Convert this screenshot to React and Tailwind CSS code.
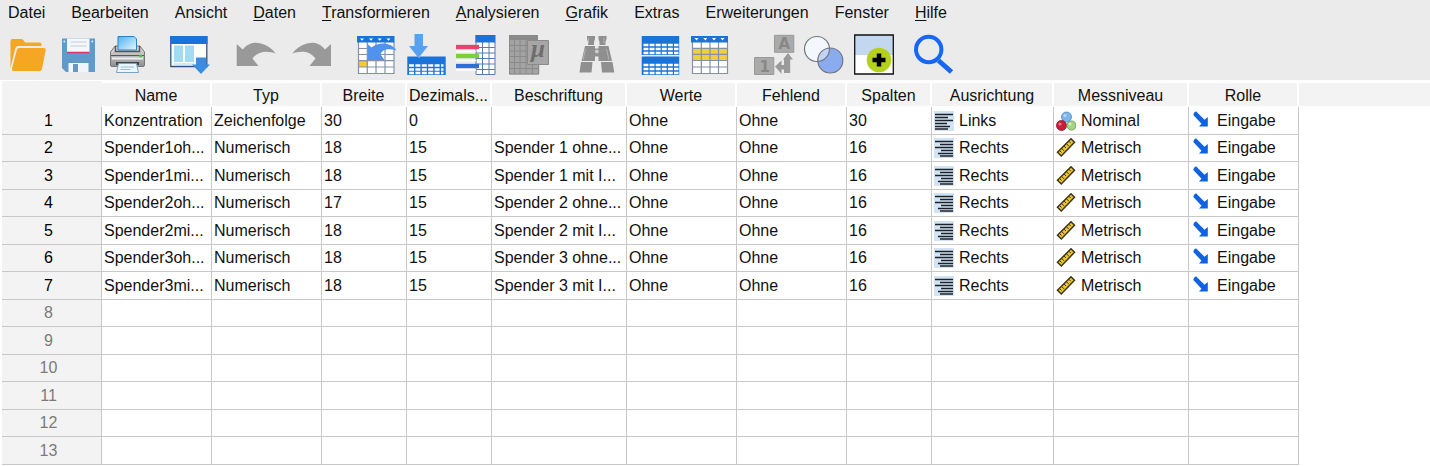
import React from 'react';

const menuItems = [
  { label: 'Datei' },
  { label: 'Bearbeiten', key: 1 },
  { label: 'Ansicht' },
  { label: 'Daten', key: 0 },
  { label: 'Transformieren', key: 0 },
  { label: 'Analysieren', key: 0 },
  { label: 'Grafik', key: 0 },
  { label: 'Extras' },
  { label: 'Erweiterungen' },
  { label: 'Fenster' },
  { label: 'Hilfe', key: 0 },
];

const BLUE = '#1a73d9';

const OpenIcon = () => (
  <>
    <path d="M2.500 34V7q0-2 2-2h9q1.500 0 2.500 2l1 1.500h15q1.500 0 1.500 2V12H10.500q-2.500 0-3.500 3z" fill="#f5a623" />
    <path d="M9 15.500q.5-1.500 2-1.500h25q2.200 0 1.700 2L34 35q-.5 2-2 2H6q-2.500 0-2-2.500z" fill="#f5a623" />
  </>
);

const SaveIcon = () => (
  <>
    <path d="M4 4.500h33V38H8l-4-4z" fill="#5f9acb" />
    <path d="M9 4.500h22.500V19H9z" fill="#f3f7fb" />
    <path d="M9 18.500h22.500" stroke="#d8345f" strokeWidth="1.500" />
    <path d="M12.500 8h16M12.500 12h16" stroke="#c9cdd1" strokeWidth="1.200" />
    <circle cx="6.300" cy="7.500" r="1" fill="#dcebf7" />
    <circle cx="34.300" cy="7.500" r="1" fill="#dcebf7" />
    <path d="M10.500 29h20v9h-20z" fill="#f1f6fb" />
    <path d="M15 30h5v8h-5z" fill="#5f9acb" />
  </>
);

const PrintIcon = () => (
  <>
    <defs>
      <linearGradient id="paper" x1="0" y1="0" x2="1" y2="1">
        <stop offset="0" stopColor="#4fb3f0" />
        <stop offset="1" stopColor="#e6f6ff" />
      </linearGradient>
      <linearGradient id="body" x1="0" y1="0" x2="0" y2="1">
        <stop offset="0" stopColor="#e2e2e2" />
        <stop offset="1" stopColor="#8e8e8e" />
      </linearGradient>
    </defs>
    <path d="M7 12h25l4.500 6v13q0 1.500-1.500 1.500H4Q2.500 32.500 2.500 31V18z" fill="url(#body)" stroke="#777" />
    <path d="M10 2.500h16l2.500 2.500v11H10z" fill="url(#paper)" stroke="#2d80c4" />
    <path d="M7.500 12v5.500h24V12" fill="none" stroke="#555" strokeWidth="1.500" />
    <path d="M3 21.500h33" stroke="#5a5a5a" />
    <path d="M4 24.500h31" stroke="#ededed" strokeWidth="2" />
    <path d="M8 28h23v3H8z" fill="#444" />
    <path d="M10.500 29.500h18l2 9h-22z" fill="#eaf5fd" stroke="#7aa2c0" />
    <path d="M13 33h13M12.500 35.500h10" stroke="#9dbfd6" />
    <circle cx="32.500" cy="22" r="1.500" fill="#3fd23b" />
  </>
);

const DialogIcon = () => (
  <>
    <path d="M2.800 3h36v29.500h-36z" fill="#fdfdf8" stroke="#34527a" strokeWidth="1.300" />
    <path d="M2.200 2h37.300v8H2.200z" fill={BLUE} />
    <path d="M6 11.500h9v16.500H6zM17 11.500h9v16.500h-9z" fill="#a3dcf2" />
    <path d="M6 30h20" stroke="#a3dcf2" />
    <path d="M28 23.500h10v7h4L33 40l-9-9.500h4z" fill="#3c8de0" />
  </>
);

const UndoIcon = () => (
  <path d="M.7 10l6 5.500C13 8 20 8 25 9.500c6 1.800 11 5 14.700 10C32 16.500 22 16.500 16.500 24.500l6 7.500H.7z" fill="#999" />
);

const RedoIcon = () => (
  <path d="M39 10l-6 5.500C27 8 20 8 15 9.500 9 11.300 4 14.500.3 19.500 8 16.500 18 16.500 23.500 24.500l-6 7.500H39z" fill="#999" />
);

const GotoCaseIcon = () => (
  <>
    <path d="M2.500 8h35.500v31H2.500z" fill="#fff" />
    <path d="M2.500 27h9v6h-9z" fill="#f2cb2f" />
    <path d="M2.500 8v31.500H38V8M2.500 14.500H38M2.500 20.500H38M2.500 26.700H38M2.500 33H38M11.300 8v31M20 8v31M29 8v31" fill="none" stroke="#8391ad" strokeWidth="1.200" />
    <path d="M1 2h37.500v6.500H1z" fill={BLUE} />
    <path d="M4 4.500h4L6 6.800zM13 4.500h4l-2 2.300zM21.700 4.500h4l-2 2.300zM30.500 4.500h4l-2 2.300z" fill="#fff" />
    <path d="M11.500 10l4 3.500C22 8.500 34 7 40.500 16.500 33 14 26 15 24.500 20.500l4 5.500h-17z" fill="#4f93ee" />
  </>
);

const InsertVarIcon = () => (
  <>
    <path d="M8.500 0H17v12h5L12.500 24 3 12h5.500z" fill="#58a1f0" />
    <path d="M1.300 22.500h10l1.500 1.500 1.500-1.500h25.400V41H1.300z" fill={BLUE} />
    <path
      d="M3 31.500h34.500M3 35.500h34.500M3 39h34.500"
      stroke="#fff"
      strokeWidth="2.300"
      strokeDasharray="5 1.400"
      fill="none"
    />
  </>
);

const VariablesIcon = () => (
  <>
    <path d="M20 8h19v32.500H20z" fill="#fff" />
    <path d="M20 8v32.500h19V8M20 13.500h19M20 19h19M20 24.500h19M20 30h19M20 35.500h19M26.500 8v32M33 8v32" fill="none" stroke="#5a7ab0" />
    <path d="M19.300 1h20.200v7.500H19.300z" fill={BLUE} />
    <path d="M0 17.500h20M0 26.500h20M0 36h20" stroke="#fff" strokeWidth="1.500" />
    <path d="M0 13h23" stroke="#e8436c" strokeWidth="4.300" />
    <path d="M0 22h23" stroke="#7ccf36" strokeWidth="4.300" />
    <path d="M0 32h23" stroke="#2f6fd8" strokeWidth="4.300" />
  </>
);

const StatsIcon = () => (
  <>
    <path d="M1 1h29v5h1.300v34.500H1z" fill="#a3a3a3" />
    <path d="M1 1h29v5H1z" fill="#8a8a8a" />
    <path d="M1.500 6v34h29V6M1.500 11.500h29M1.500 17h29M1.500 22.500h29M1.500 28.500h29M1.500 34.500h29M6.500 6v34M12 6v34M18 6v34M24.500 6v34" stroke="#8a8a8a" fill="none" />
    <path d="M19.500 6.500h21v24h-21z" fill="#a6a6a6" stroke="#8a8a8a" />
    <text x="23" y="23" fill="#6e6e6e" fontSize="25" fontStyle="italic" fontWeight="bold" fontFamily="Liberation Serif, serif">μ</text>
  </>
);

const FindIcon = () => (
  <g fill="#8f8f8f">
    <path d="M11 2h8v3l-1 3v3h-6V8l-1-3zM22.500 2h8v3l-1 3v3h-6V8l-1-3z" />
    <path d="M9 12h10v15H5.500zM22.500 12h10L36 27H22.500z" />
    <path d="M18 14.500h6v8h-6z" />
    <circle cx="20.800" cy="17.500" r="2" fill="#c9c9c9" />
    <path d="M5 28h11.500l-1 10.500h-12zM25 28h11.500l1.800 10.500H26z" />
    <path d="M12.500 3.500v6M28 3.500v6M9.500 15L7 26M30.500 15l2.500 11" stroke="#b2b2b2" />
  </g>
);

const SplitIcon = () => (
  <>
    <path d="M1.700 2h37.500v19H1.700zM1.700 22.500h37.500V41H1.700z" fill={BLUE} />
    <path
      d="M3.500 11h35M3.500 15h35M3.500 19h35M3.500 31h35M3.500 35h35M3.500 39h35"
      stroke="#fff"
      strokeWidth="2.500"
      strokeDasharray="4.900 1.200"
    />
  </>
);

const SelectIcon = () => (
  <>
    <path d="M2 8h35.500v31.500H2z" fill="#fff" />
    <path d="M2 14.500h35.500V26.500H2z" fill="#f3cf35" />
    <path d="M2.500 8v31.500h35V8M2.500 14.300h35M2.500 20.300h35M2.500 26.500h35M2.500 33h35M11.300 8v31.500M20 8v31.500M28.500 8v31.500" fill="none" stroke="#8590a5" strokeWidth="1.200" />
    <path d="M1 2h37v6.500H1z" fill={BLUE} />
    <path d="M4.500 4h4l-2 2.500zM13.300 4h4l-2 2.500zM22 4h4l-2 2.500zM30.500 4h4l-2 2.500z" fill="#fff" />
  </>
);

const ValueLabelsIcon = () => (
  <>
    <path d="M20.500 1.300h19.300v17H20.500zM.5 23.500h19.300v17H.5z" fill="#aaa" stroke="#999" />
    <g fill="#888" fontSize="15" fontWeight="bold" fontFamily="DejaVu Sans, sans-serif">
      <text x="24.500" y="15.300">A</text>
      <text x="5.500" y="37.500">1</text>
    </g>
    <path d="M34 19l5 6.500h-2.800V39H30v-3.500h-2.500V40l-6.500-7.500 6.500-6V31H30v-5.500h-1z" fill="#9a9a9a" />
  </>
);

const SetsIcon = () => (
  <>
    <circle cx="13" cy="15" r="12.500" fill="#f4f7fd" />
    <circle cx="26.300" cy="26.500" r="12.500" fill="#8aabee" />
    <path d="M13.900 27.500A12.500 12.500 0 0 1 25.400 14 12.500 12.500 0 0 1 13.900 27.500z" fill="#c3d3f5" />
    <circle cx="13" cy="15" r="12.500" fill="none" stroke="#707680" strokeWidth="1.200" />
    <circle cx="26.300" cy="26.500" r="12.500" fill="none" stroke="#707680" strokeWidth="1.200" />
  </>
);

const AddIcon = () => (
  <>
    <path d="M.7 1h38.600v39H.7z" fill="#fff" />
    <path d="M.7 1h38.600v20H.7z" fill="#c3d8ee" />
    <path d="M.7 1h38.600v39H.7z" fill="none" stroke="#111" strokeWidth="1.300" />
    <circle cx="25" cy="26" r="12.300" fill="#b5d11d" />
    <path d="M25 19.500v13M18.500 26h13" stroke="#000" strokeWidth="4.500" />
  </>
);

const SearchIcon = () => (
  <>
    <circle cx="14.700" cy="15.500" r="12.700" fill="none" stroke="#1667f5" strokeWidth="4" />
    <path d="M24.500 26.500L37.500 38" stroke="#1667f5" strokeWidth="5" />
  </>
);

const tools = [
  { name: 'Öffnen', Icon: OpenIcon, gap: '' },
  { name: 'Speichern', Icon: SaveIcon, gap: 'ml-2.5' },
  { name: 'Drucken', Icon: PrintIcon, gap: 'ml-2.5' },
  { name: 'Zuletzt verwendete Dialoge', Icon: DialogIcon, gap: 'ml-5' },
  { name: 'Rückgängig', Icon: UndoIcon, gap: 'ml-7', disabled: true },
  { name: 'Wiederholen', Icon: RedoIcon, gap: 'ml-4', disabled: true },
  { name: 'Gehe zu Fall', Icon: GotoCaseIcon, gap: 'ml-6' },
  { name: 'Gehe zu Variable', Icon: InsertVarIcon, gap: 'ml-2.5' },
  { name: 'Variablen', Icon: VariablesIcon, gap: 'ml-2.5' },
  { name: 'Deskriptive Statistik', Icon: StatsIcon, gap: 'ml-3', disabled: true },
  { name: 'Suchen', Icon: FindIcon, gap: 'ml-7', disabled: true },
  { name: 'Datei aufteilen', Icon: SplitIcon, gap: 'ml-6' },
  { name: 'Fälle auswählen', Icon: SelectIcon, gap: 'ml-2.5' },
  { name: 'Wertelabels', Icon: ValueLabelsIcon, gap: 'ml-6', disabled: true },
  { name: 'Variablensets', Icon: SetsIcon, gap: 'ml-2.5' },
  { name: 'Symbolleiste anpassen', Icon: AddIcon, gap: 'ml-2.5' },
  { name: 'Anwendung durchsuchen', Icon: SearchIcon, gap: 'ml-5' },
];

const columns = [
  { title: 'Name', width: 'w-[110px]' },
  { title: 'Typ', width: 'w-[110px]' },
  { title: 'Breite', width: 'w-[85px]' },
  { title: 'Dezimals...', width: 'w-[85px]' },
  { title: 'Beschriftung', width: 'w-[135px]' },
  { title: 'Werte', width: 'w-[110px]' },
  { title: 'Fehlend', width: 'w-[110px]' },
  { title: 'Spalten', width: 'w-[85px]' },
  { title: 'Ausrichtung', width: 'w-[122px]' },
  { title: 'Messniveau', width: 'w-[135px]' },
  { title: 'Rolle', width: 'w-[110px]' },
];

const variables = [
  ['Konzentration', 'Zeichenfolge', '30', '0', '', 'Ohne', 'Ohne', '30', 'Links', 'Nominal', 'Eingabe'],
  ['Spender1oh...', 'Numerisch', '18', '15', 'Spender 1 ohne...', 'Ohne', 'Ohne', '16', 'Rechts', 'Metrisch', 'Eingabe'],
  ['Spender1mi...', 'Numerisch', '18', '15', 'Spender 1 mit I...', 'Ohne', 'Ohne', '16', 'Rechts', 'Metrisch', 'Eingabe'],
  ['Spender2oh...', 'Numerisch', '17', '15', 'Spender 2 ohne...', 'Ohne', 'Ohne', '16', 'Rechts', 'Metrisch', 'Eingabe'],
  ['Spender2mi...', 'Numerisch', '18', '15', 'Spender 2 mit I...', 'Ohne', 'Ohne', '16', 'Rechts', 'Metrisch', 'Eingabe'],
  ['Spender3oh...', 'Numerisch', '18', '15', 'Spender 3 ohne...', 'Ohne', 'Ohne', '16', 'Rechts', 'Metrisch', 'Eingabe'],
  ['Spender3mi...', 'Numerisch', '18', '15', 'Spender 3 mit I...', 'Ohne', 'Ohne', '16', 'Rechts', 'Metrisch', 'Eingabe'],
];

const ROW_COUNT = 13;

const cellIcons = {
  Links: (
    <>
      <path d="M0 0h20v20H0z" fill="#d2e4f3" />
      <path d="M1 3.500h18M1 6.500h13M1 9.500h18M1 12.500h12M1 15.500h15M1 18h13" stroke="#1c2228" strokeWidth="1.500" />
    </>
  ),
  Rechts: (
    <>
      <path d="M0 0h20v20H0z" fill="#d2e4f3" />
      <path d="M1 3.500h18M6 6.500h13M1 9.500h18M7 12.500h12M4 15.500h15M6 18h13" stroke="#1c2228" strokeWidth="1.500" />
    </>
  ),
  Nominal: (
    <>
      <circle cx="10.500" cy="6" r="5" fill="#7db4ea" stroke="#4a86c4" strokeWidth=".8" />
      <circle cx="5.500" cy="14.500" r="5" fill="#c81e3a" stroke="#8e1228" strokeWidth=".8" />
      <circle cx="15.500" cy="14.500" r="4.600" fill="#a5d284" stroke="#5f9a44" strokeWidth=".8" />
      <circle cx="9" cy="4.500" r="1.600" fill="#b4d7f6" />
      <circle cx="4" cy="13" r="1.500" fill="#ee8090" />
      <circle cx="14" cy="13" r="1.500" fill="#d5efc4" />
    </>
  ),
  Metrisch: (
    <>
      <path d="M15 .8L18.500 4.300 5.300 18 1.500 14.200z" fill="#eec52f" stroke="#3b3518" strokeWidth="1.500" />
      <path d="M12.800 3.200l2 2M10.300 5.600l2.600 2.600M8 8l2 2M5.500 10.300l2.600 2.600M3.500 12.500l2 2" stroke="#3b3518" />
    </>
  ),
  Eingabe: (
    <path d="M3 1.800L5 .3l8.500 8.500L16.800 6V15.500H8l2.500-2.700L2.300 4z" fill="#0f62e0" />
  ),
};

function MenuLabel({ label, hotkey }) {
  if (hotkey === undefined) return label;
  return (
    <>
      {label.slice(0, hotkey)}
      <span className="underline underline-offset-2">{label[hotkey]}</span>
      {label.slice(hotkey + 1)}
    </>
  );
}

function MenuBar() {
  return (
    <nav className="flex h-[26px] items-center gap-[26px] px-2">
      {menuItems.map((item) => (
        <button key={item.label} type="button" className="whitespace-nowrap leading-5">
          <MenuLabel label={item.label} hotkey={item.key} />
        </button>
      ))}
    </nav>
  );
}

function Toolbar() {
  return (
    <div className="flex px-2 pt-2 pb-[5px]">
      {tools.map(({ name, Icon, gap, disabled }) => (
        <button key={name} type="button" aria-label={name} disabled={disabled} className={`shrink-0 ${gap}`}>
          <svg viewBox="0 0 40 41" className="block h-[41px] w-10 overflow-visible">
            <Icon />
          </svg>
        </button>
      ))}
    </div>
  );
}

function Cell({ value }) {
  const icon = cellIcons[value];
  if (!icon) return value;
  const isRole = value === 'Eingabe';
  return (
    <span className={`flex items-center ${isRole ? 'gap-1.5' : 'gap-[5px]'}`}>
      <svg viewBox="0 0 20 20" className="size-5 shrink-0">
        {icon}
      </svg>
      {value}
    </span>
  );
}

function VariableGrid() {
  return (
    <table className="w-full table-fixed border-separate border-spacing-0 leading-5">
      <colgroup>
        <col className="w-[100px]" />
        {columns.map((col) => (
          <col key={col.title} className={col.width} />
        ))}
        <col />
      </colgroup>
      <thead>
        <tr className="h-[26px]">
          <td className="border-r border-[#f3f3f3] bg-[#f3f3f3] p-0" />
          {columns.map((col) => (
            <th
              key={col.title}
              scope="col"
              className="overflow-hidden border-t-2 border-r-2 border-b border-white bg-[#f3f3f3] p-0 pt-0.5 text-center font-normal whitespace-nowrap"
            >
              {col.title}
            </th>
          ))}
          <td className="border-t-2 border-b border-white bg-[#f3f3f3] p-0" />
        </tr>
      </thead>
      <tbody>
        {Array.from({ length: ROW_COUNT }, (_, i) => {
          const row = variables[i];
          return (
            <tr key={i} className="h-[27px] odd:h-7">
              <th
                scope="row"
                className={`border-r border-b border-[#c8c8c8] bg-[#f3f3f3] p-0 pr-1.5 text-center font-normal ${
                  row ? 'text-black' : 'text-[#7b7b7b]'
                }`}
              >
                {i + 1}
              </th>
              {columns.map((col, c) => (
                <td
                  key={col.title}
                  className="overflow-hidden border-r border-b border-[#c8c8c8] p-0 pl-0.5 whitespace-nowrap"
                >
                  {row && <Cell value={row[c]} />}
                </td>
              ))}
              <td className="p-0" />
            </tr>
          );
        })}
      </tbody>
    </table>
  );
}

export default function App() {
  return (
    <div className="flex min-h-screen flex-col bg-white font-['Liberation_Sans',Arial,sans-serif] text-base text-[#111]">
      <header className="bg-[#ebebeb]">
        <MenuBar />
        <Toolbar />
      </header>
      <main className="flex-1 border-t border-white pl-0.5">
        <VariableGrid />
      </main>
    </div>
  );
}
